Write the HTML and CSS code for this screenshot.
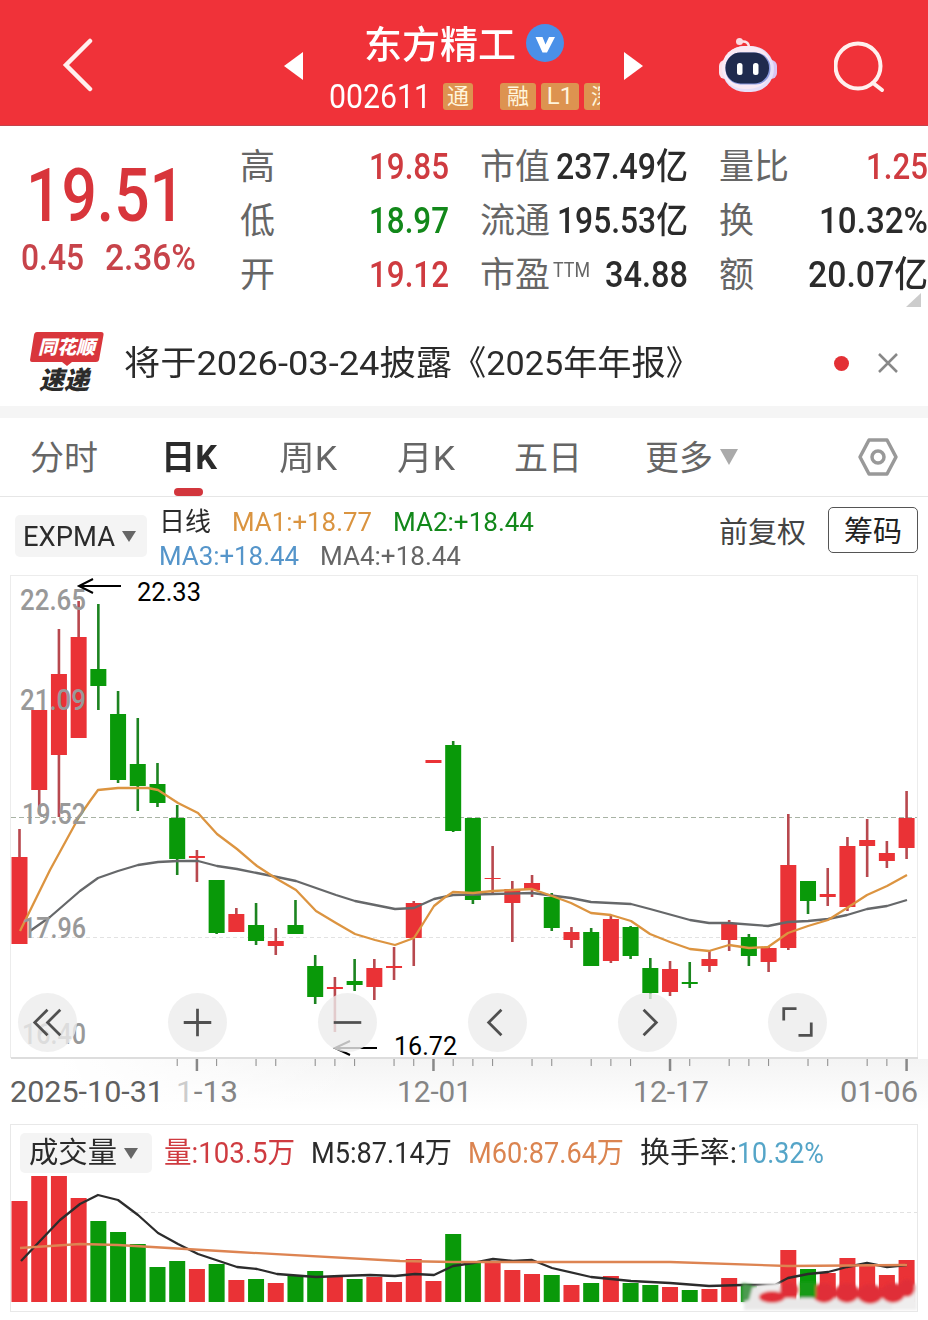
FILE: index.html
```html
<!DOCTYPE html>
<html lang="zh-CN">
<head>
<meta charset="UTF-8">
<meta name="viewport" content="width=device-width, initial-scale=1.0">
<title>东方精工 002611</title>
<link rel="stylesheet" href="styles.css">
</head>
<body>

<header class="topbar">
    <svg class="back" width="34" height="56" viewBox="0 0 34 56"><path d="M30 5 L6 29 L30 53"/></svg>
    <svg class="prev" width="19" height="28" viewBox="0 0 19 28"><path d="M19 0 V28 L0 14 Z"/></svg>
    <div class="stock">
        <div class="stock-name">
            <span data-w="152">东方精工</span>
            <svg width="38" height="38" viewBox="0 0 38 38"><circle cx="19" cy="19" r="19" fill="#4a90e8"/><path d="M9.500 13 H16.500 L19.500 20.500 L23 13 H29 L21 28.500 H16.500 Z" fill="#fff"/></svg>
        </div>
        <div class="stock-code">
            <span class="code" data-w="102">002611</span>
            <span class="tag tag-first">通</span>
            <div class="tags"><span class="tag wide">融</span><span class="tag l1">L1</span><span class="tag wide">深</span></div>
        </div>
    </div>
    <svg class="next" width="19" height="28" viewBox="0 0 19 28"><path d="M0 0 V28 L19 14 Z"/></svg>
    <svg class="robot" width="60" height="56" viewBox="0 0 60 56">
        <path d="M22 5 Q31 3 31 11" fill="none" stroke="#fbe3ea" stroke-width="2.500"/>
        <circle cx="21.500" cy="4.500" r="3.500" fill="#fbdbe2"/>
        <rect x="1" y="23" width="12" height="19" rx="6" fill="#fbe1ea"/>
        <rect x="47" y="23" width="12" height="19" rx="6" fill="#d9c5f2"/>
        <rect x="4" y="9" width="52" height="46" rx="23" fill="#e6e0fa"/>
        <rect x="4" y="9" width="49" height="43" rx="22" fill="#faeaf5"/>
        <rect x="7.500" y="15.500" width="45" height="32" rx="15" fill="#8c9be0"/>
        <rect x="7.500" y="15.500" width="43.500" height="31" rx="15" fill="#1f2a4e"/>
        <rect x="19" y="26" width="5.500" height="12" rx="2.500" fill="#fff"/>
        <rect x="35" y="26" width="5.500" height="12" rx="2.500" fill="#fff"/>
    </svg>
    <svg class="search" width="52" height="52" viewBox="0 0 52 52"><circle cx="24" cy="25" r="22.500"/><path d="M39 42 L48 49"/></svg>
</header>

<section class="quote">
    <div class="price">
        <div class="last"><span data-w="159">19.51</span></div>
        <div class="change"><span data-w="63">0.45</span><span data-w="91">2.36%</span></div>
    </div>
    <div class="stats">
        <div class="stat"><label>高</label><b class="red" data-w="80">19.85</b></div>
        <div class="stat"><label>市值</label><b data-w="132">237.49亿</b></div>
        <div class="stat"><label>量比</label><b class="red" data-w="62">1.25</b></div>
        <div class="stat"><label>低</label><b class="green" data-w="80">18.97</b></div>
        <div class="stat"><label>流通</label><b data-w="131">195.53亿</b></div>
        <div class="stat"><label>换</label><b data-w="109">10.32%</b></div>
        <div class="stat"><label>开</label><b class="red" data-w="80">19.12</b></div>
        <div class="stat"><label>市盈<sup data-w="37">TTM</sup></label><b data-w="83">34.88</b></div>
        <div class="stat"><label>额</label><b data-w="120">20.07亿</b></div>
    </div>
    <i class="corner"></i>
</section>

<section class="notice">
    <div class="logo">
        <svg width="74" height="34" viewBox="0 0 74 34"><path d="M7 0 H71 Q74 0 73.500 3 L69 28 Q68.500 30 66 30 H42 L37 34 L32 30 H2 Q0 30 0 28 L4 3 Q4.500 0 7 0 Z" fill="#d9363c"/></svg>
        <span class="logo-top">同花顺</span>
        <span class="logo-bottom">速递</span>
    </div>
    <div class="notice-text"><span data-w="328">将于2026-03-24披露</span><span data-w="248">《2025年年报》</span></div>
    <i class="dot"></i>
    <svg class="close" width="20" height="20" viewBox="0 0 20 20"><path d="M1 1 L19 19 M19 1 L1 19"/></svg>
</section>

<nav class="tabs">
    <span class="t1">分时</span>
    <span class="t2 active"><em data-w="56">日K</em></span>
    <span class="t3"><em data-w="58">周K</em></span>
    <span class="t4"><em data-w="58">月K</em></span>
    <span class="t5">五日</span>
    <span class="t6">更多</span>
    <i class="arrow"></i>
    <svg class="setting" width="40" height="38" viewBox="0 0 40 38"><path d="M11 2 H29 L38 19 L29 36 H11 L2 19 Z"/><circle cx="20" cy="19" r="6"/></svg>
</nav>

<section class="indicator">
    <div class="pick"><span data-w="92">EXPMA</span><i class="arrow"></i></div>
    <div class="ma">
        <div><span class="dark" data-w="52">日线</span><span class="orange" data-w="140">MA1:+18.77</span><span class="green" data-w="141">MA2:+18.44</span></div>
        <div><span class="blue" data-w="140">MA3:+18.44</span><span class="gray" data-w="141">MA4:+18.44</span></div>
    </div>
    <span class="fuquan">前复权</span>
    <button class="chips">筹码</button>
</section>

<section class="chart">
    <svg id="kline" width="928" height="549" viewBox="0 575 928 549"></svg>
    <div class="tools">
        <button><svg viewBox="0 0 60 60"><path d="M30 17 L17 30 L30 43 M43 17 L30 30 L43 43"/></svg></button>
        <button><svg viewBox="0 0 60 60"><path d="M16 30 H44 M30 16 V44"/></svg></button>
        <button><svg viewBox="0 0 60 60"><path d="M16 30 H44"/></svg></button>
        <button><svg viewBox="0 0 60 60"><path d="M34 17 L21 30 L34 43"/></svg></button>
        <button><svg viewBox="0 0 60 60"><path d="M26 17 L39 30 L26 43"/></svg></button>
        <button><svg viewBox="0 0 60 60"><path d="M16 28 V16 H29 M44 30 V43 H31"/></svg></button>
    </div>
</section>

<section class="volume">
    <div class="volume-head">
        <div class="pick"><span data-w="88">成交量</span><i class="arrow"></i></div>
        <span class="red" data-w="131">量:103.5万</span>
        <span class="dark" data-w="141">M5:87.14万</span>
        <span class="m60" data-w="156">M60:87.64万</span>
        <div class="rate"><span class="dark" data-w="97">换手率:</span><span class="cyan" data-w="87">10.32%</span></div>
    </div>
    <svg id="vol" width="906" height="135" viewBox="11 1176 906 135"></svg>
</section>

<script>
var RED = "#ea3236", GREEN = "#099909";
var X0 = 19.5, STEP = 19.713, i;

// colour, high, body top, body bottom, low, volume top
var days = [
    ["r", 829, 857, 944, 944, 1201], ["r", 710, 710, 790, 814, 1176], ["r", 629, 674, 755, 817, 1176],
    ["r", 601, 637, 738, 738, 1198], ["g", 604, 669, 686, 710, 1221], ["g", 691, 714, 780, 783, 1232],
    ["g", 718, 764, 786, 811, 1244], ["g", 763, 784, 803, 807, 1267], ["g", 805, 818, 859, 875, 1261],
    ["r", 850, 856, 858, 882, 1269], ["g", 880, 880, 933, 934, 1264], ["r", 908, 914, 932, 932, 1280],
    ["g", 903, 925, 941, 945, 1279], ["r", 928, 941, 946, 955, 1283], ["g", 900, 925, 934, 934, 1276],
    ["g", 955, 966, 997, 1004, 1271], ["r", 977, 987, 989, 1032, 1277], ["g", 959, 981, 985, 991, 1279],
    ["r", 959, 968, 987, 1000, 1277], ["r", 947, 966, 968, 980, 1282], ["r", 901, 903, 938, 966, 1259],
    ["r", 760, 760, 763, 763, 1281], ["g", 741, 745, 831, 832, 1234], ["g", 818, 818, 900, 904, 1262],
    ["r", 846, 878, 879, 893, 1262], ["r", 881, 889, 903, 942, 1270], ["r", 875, 883, 890, 897, 1274],
    ["g", 893, 897, 928, 931, 1275], ["r", 927, 932, 940, 948, 1285], ["g", 928, 932, 966, 966, 1283],
    ["r", 915, 919, 961, 963, 1276], ["g", 926, 927, 956, 959, 1283], ["g", 958, 968, 993, 999, 1285],
    ["r", 961, 969, 992, 996, 1287], ["g", 962, 982, 984, 988, 1290], ["r", 951, 959, 966, 972, 1289],
    ["r", 920, 923, 940, 951, 1278], ["g", 934, 937, 956, 966, 1285], ["r", 946, 948, 962, 972, 1291],
    ["r", 814, 865, 948, 950, 1250], ["g", 881, 881, 901, 914, 1269], ["r", 868, 894, 897, 906, 1273],
    ["r", 837, 846, 907, 911, 1258], ["r", 819, 840, 846, 877, 1266], ["r", 841, 853, 861, 868, 1275],
    ["r", 791, 818, 848, 859, 1260]
];
var ma1 = "20,931 50,870 79,817 90,801 98,790 118,788 148,788 158,790 178,803 198,813 217,834 237,849 257,866 277,879 296,890 316,911 336,923 355,934 375,940 395,945 414,938 424,922 434,906 444,898 453,892 473,893 493,891 513,890 532,889 552,896 571,903 591,913 611,915 631,921 650,934 670,942 690,949 709,951 729,945 749,948 768,947 788,933 808,926 828,920 847,908 867,895 887,886 907,875";
var ma4 = "30,931 50,917 80,891 98,878 118,871 138,865 158,862 178,861 198,861 217,866 237,869 257,873 277,877 296,881 316,888 336,895 355,901 375,905 395,909 414,908 434,899 453,895 493,894 532,893 571,898 591,902 631,904 650,909 690,920 709,923 729,923 768,926 788,922 808,921 828,919 847,915 867,909 887,906 907,900";
var m5 = "21,1261 40,1241 60,1220 80,1204 98,1195 118,1200 138,1215 158,1233 178,1244 198,1254 237,1267 257,1269 277,1274 316,1277 340,1276 370,1275 395,1276 415,1274 434,1275 453,1266 473,1263 493,1259 513,1261 532,1260 552,1268 591,1277 631,1281 670,1283 709,1286 742,1285 775,1285 788,1278 808,1274 828,1272 847,1267 867,1263 887,1267 907,1265";
var m60 = "20,1248 80,1244 118,1245 237,1252 400,1261 453,1262 670,1262 788,1266 907,1265";

function rect(x, y, w, h, fill) {
    return '<rect x="' + x + '" y="' + y + '" width="' + w + '" height="' + h + '" fill="' + fill + '"/>';
}
function line(x1, y1, x2, y2, cls) {
    return '<line x1="' + x1 + '" y1="' + y1 + '" x2="' + x2 + '" y2="' + y2 + '" class="' + cls + '"/>';
}
function text(x, y, w, cls, s) {
    return '<text x="' + x + '" y="' + y + '" textLength="' + w + '" lengthAdjust="spacingAndGlyphs" class="' + cls + '">' + s + '</text>';
}
function poly(points, cls) {
    return '<polyline points="' + points + '" class="' + cls + '"/>';
}

// candles
var k = '<defs><linearGradient id="fade" x1="0" y1="0" x2="0" y2="1"><stop offset="0" stop-color="#f4f4f4"/><stop offset="1" stop-color="#fff"/></linearGradient>';
k += '<linearGradient id="side"><stop offset="0" stop-color="#fff"/><stop offset="1" stop-color="#fff" stop-opacity="0"/></linearGradient></defs>';
k += rect(60, 1059, 868, 52, "url(#fade)") + rect(60, 1059, 300, 52, "url(#side)");
k += '<rect x="10.500" y="575.500" width="907" height="482" class="frame"/>';
k += line(11, 1058, 918, 1058, "axis");
k += line(11, 817.5, 917, 817.5, "mid") + line(30, 937.5, 917, 937.5, "grid");
var bars = "";
for (i = 0; i < days.length; i++) {
    var d = days[i], cx = X0 + STEP * i, c = d[0] == "r" ? RED : GREEN;
    k += rect(cx - 1.3, d[1], 2.6, d[4] - d[1], d[0] == "r" ? "#b8484e" : "#1c8420");
    k += rect(cx - 8, d[2], 16, d[3] - d[2], c);
    bars += rect(cx - 8, d[5], 16, 1302 - d[5], c);
}
k += poly(ma4, "line ma4") + poly(ma1, "line ma1");

// price scale
k += text(20, 610, 66, "scale", "22.65") + text(20, 710, 66, "scale", "21.09");
k += text(22, 824, 64, "scale", "19.52") + text(22, 938, 64, "scale", "17.96") + text(22, 1044, 64, "scale", "16.40");

// high and low marks
k += '<path d="M121 586 H80 M93 579 L79 586 L93 593" class="mark"/>' + text(137, 601, 64, "mark-text", "22.33");
k += '<path d="M377 1048 H336 M350 1041 L335 1048 L350 1055" class="mark"/>' + text(394, 1055, 63, "mark-text", "16.72");

// date axis
var small = [8, 10, 12, 13, 15, 16, 17, 19, 20, 22, 23, 24, 26, 27, 29, 30, 31, 34, 36, 37, 38, 40, 41, 43, 44];
var big = [9, 21, 33, 45];
for (i = 0; i < small.length; i++) k += line(X0 + STEP * small[i], 1059, X0 + STEP * small[i], 1066, "tick");
for (i = 0; i < big.length; i++) k += line(X0 + STEP * big[i], 1059, X0 + STEP * big[i], 1071, "tick big");
k += text(10, 1102, 154, "date first", "2025-10-31");
k += '<text x="176" y="1102" textLength="62" lengthAdjust="spacingAndGlyphs" class="date"><tspan class="pale">1</tspan>-13</text>';
k += text(397, 1102, 75, "date", "12-01") + text(633, 1102, 76, "date", "12-17") + text(840, 1102, 78, "date", "01-06");
document.getElementById("kline").innerHTML = k;

// volume
var v = '<defs><filter id="soft" x="-10%" y="-30%" width="120%" height="160%"><feGaussianBlur stdDeviation="1.500"/></filter></defs>';
v += line(130, 1212.5, 917, 1212.5, "grid") + bars + poly(m5, "line m5") + poly(m60, "line m60");
v += '<g filter="url(#soft)"><path d="M744 1290 Q760 1283 778 1283 L784 1298 L917 1298 V1310 H744 Z" fill="#e9e8e8"/>';
v += '<path d="M761 1287 L780 1282 L780 1296 L760 1296 Z" fill="#efeeee"/>';
v += '<path d="M742 1283 L753 1285 L749 1300 L742 1302 Z" fill="#4b9a50"/>';
v += '<path d="M892 1298 L917 1284 V1310 H892 Z" fill="#efeeee"/>';
var blobs = [[772, 1297, 13, 6], [789, 1290, 9, 8], [824, 1293, 12, 10], [847, 1293, 12, 10], [870, 1294, 13, 10], [893, 1293, 12, 10], [907, 1288, 8, 9]];
for (i = 0; i < blobs.length; i++) v += '<ellipse cx="' + blobs[i][0] + '" cy="' + blobs[i][1] + '" rx="' + blobs[i][2] + '" ry="' + blobs[i][3] + '" fill="#e02f38"/>';
v += rect(800, 1282, 16, 16, "#149a18") + '</g>';
document.getElementById("vol").innerHTML = v;

// fit labels to their column widths
var items = document.querySelectorAll("[data-w]");
for (i = 0; i < items.length; i++) {
    var w = +items[i].getAttribute("data-w"), full = items[i].getBoundingClientRect().width;
    items[i].style.transform = "scaleX(" + w / full + ")";
    items[i].style.marginRight = (w - full) + "px";
}
</script>

</body>
</html>
```

FILE: styles.css
```css
* {
    box-sizing: border-box;
}

body {
    margin: 0;
    width: 928px;
    height: 1320px;
    overflow: hidden;
    background: #fff;
    color: #2b2b2b;
    font-family: Roboto, "Noto Sans CJK SC", sans-serif;
}

svg {
    display: block;
}

[data-w] {
    display: inline-block;
    white-space: nowrap;
    flex: none;
    transform-origin: left center;
}

.red { color: #cf3b40; }
.green { color: #12881a; }
.orange { color: #da9440; }
.blue { color: #5595ca; }
.gray { color: #666; }
.dark { color: #2b2b2b; }
.cyan { color: #55a5c8; }
.volume-head .m60 { color: #db8450; }

/* top bar */
.topbar {
    display: flex;
    height: 126px;
    background: #f03239;
    border-bottom: 1px solid #c4434b;
}

.topbar svg {
    flex: none;
}

.back {
    margin: 36px 0 0 60px;
    fill: none;
    stroke: #fff0ee;
    stroke-width: 4.5;
    stroke-linecap: round;
}

.prev, .next {
    margin-top: 52px;
    fill: #fff;
}

.prev {
    margin-left: 190px;
}

.stock {
    width: 321px;
    color: #fff;
}

.stock-name {
    display: flex;
    align-items: center;
    height: 50px;
    margin: 19px 0 0 61px;
    font-size: 38px;
    font-weight: 500;
}

.stock-name span {
    padding-bottom: 6px;
}

.stock-name svg {
    margin: -3px 0 0 10px;
}

.stock-code {
    display: flex;
    align-items: center;
    height: 30px;
    margin: 12px 0 0 26px;
}

.code {
    padding-top: 2px;
    font-size: 33px;
    line-height: 30px;
}

.tag {
    flex: none;
    width: 30px;
    height: 27px;
    border-radius: 3px;
    background: #dd9350;
    color: #fff5dc;
    font-size: 22px;
    line-height: 27px;
    text-align: center;
}

.tag-first {
    margin-left: 12px;
}

.tags {
    display: flex;
    gap: 5px;
    width: 100px;
    margin-left: 27px;
    overflow: hidden;
}

.tag.wide {
    width: 36px;
}

.tag.l1 {
    width: 38px;
    font-size: 24px;
}

.robot {
    margin: 37px 0 0 75px;
}

.search {
    margin: 41px 0 0 56px;
    fill: none;
    stroke: #fff0ee;
    stroke-width: 4;
    stroke-linecap: round;
}

/* quote */
.quote {
    position: relative;
    display: flex;
    height: 194px;
}

.price {
    width: 240px;
    color: #d8353b;
}

.last {
    height: 86px;
    margin: 26px 0 0 26px;
    font-size: 75px;
    line-height: 86px;
    font-weight: 500;
}

.change {
    display: flex;
    gap: 21px;
    margin-left: 21px;
    color: #c7434a;
    font-size: 36px;
    line-height: 40px;
    font-weight: 500;
}

.stats {
    display: grid;
    grid-template-columns: 209px 208px 209px;
    grid-auto-rows: 54px;
    column-gap: 31px;
    padding-top: 14px;
}

.stat {
    display: flex;
    justify-content: space-between;
    align-items: center;
    font-size: 36px;
    line-height: 54px;
    white-space: nowrap;
}

.stat label {
    padding-top: 1px;
    color: #666;
    font-size: 35px;
}

.stat b {
    font-weight: 500;
}

.stat sup {
    margin-left: 3px;
    font-size: 21px;
    line-height: 20px;
    vertical-align: 10px;
}

.corner {
    position: absolute;
    right: 7px;
    bottom: 13px;
    border-left: 15px solid transparent;
    border-bottom: 14px solid #ccc;
}

/* notice */
.notice {
    display: flex;
    align-items: center;
    height: 86px;
}

.logo {
    position: relative;
    width: 74px;
    height: 62px;
    margin-left: 30px;
}

.logo span {
    position: absolute;
    font-weight: 900;
    font-style: italic;
    white-space: nowrap;
}

.logo-top {
    left: 8px;
    top: 4px;
    color: #fff;
    font-size: 19px;
    line-height: 24px;
}

.logo-bottom {
    left: 9px;
    top: 35px;
    font-size: 25px;
    line-height: 27px;
}

.notice-text {
    display: flex;
    width: 576px;
    padding-bottom: 6px;
    margin-left: 20px;
    font-size: 34px;
}

.dot {
    width: 15px;
    height: 15px;
    margin-left: 134px;
    border-radius: 50%;
    background: #e33035;
}

.close {
    margin-left: 29px;
    stroke: #888;
    stroke-width: 2.5;
}

/* tabs */
.tabs {
    display: flex;
    align-items: center;
    height: 91px;
    border-top: 12px solid #f5f5f5;
    border-bottom: 1px solid #e6e6e6;
    color: #666;
    font-size: 34px;
}

.tabs em {
    font-style: normal;
}

.tabs > span {
    flex: none;
    padding-bottom: 4px;
}

.tabs .t1 { width: 161px; padding-left: 30px; }
.tabs .t2 { width: 118px; }
.tabs .t3 { width: 118px; }
.tabs .t4 { width: 117px; }
.tabs .t5 { width: 131px; }

.tabs .t2.active {
    position: relative;
    align-self: stretch;
    line-height: 78px;
    color: #2b2b2b;
    font-weight: 700;
}

.tabs .active:after {
    position: absolute;
    content: "";
    left: 13px;
    bottom: 0;
    width: 29px;
    height: 8px;
    border-radius: 4px;
    background: #d2363d;
}

.arrow {
    flex: none;
    border: solid transparent;
    border-width: 11px 7.5px 0;
    border-top-color: #666;
}

.tabs .arrow {
    margin-left: 7px;
    border-width: 16px 9px 0;
    border-top-color: #aaa;
}

.setting {
    margin-left: 120px;
    fill: none;
    stroke: #999;
    stroke-width: 3.5;
    stroke-linejoin: round;
}

/* indicator */
.indicator {
    display: flex;
    height: 78px;
}

.pick {
    display: flex;
    align-items: center;
    flex: none;
    width: 132px;
    height: 42px;
    padding-left: 8px;
    border-radius: 5px;
    background: #f4f4f4;
}

.pick .arrow {
    margin-left: 7px;
}

.indicator .pick {
    margin: 18px 0 0 15px;
    font-size: 28px;
}

.ma {
    width: 560px;
    margin: 8px 0 0 12px;
    font-size: 26px;
    line-height: 34px;
}

.ma div {
    display: flex;
    gap: 21px;
}

.fuquan {
    flex: none;
    width: 109px;
    margin-top: 15px;
    color: #444;
    font-size: 29px;
    line-height: 42px;
}

.chips {
    flex: none;
    width: 90px;
    height: 46px;
    margin-top: 10px;
    padding: 3px 0 0;
    border: 1px solid #555;
    border-radius: 5px;
    background: #fff;
    color: #222;
    font: 29px/40px Roboto, "Noto Sans CJK SC", sans-serif;
}

/* chart */
.chart {
    position: relative;
    height: 549px;
}

.tools {
    position: absolute;
    left: 18px;
    top: 418px;
    display: flex;
    gap: 91px;
}

.tools button {
    width: 59px;
    height: 59px;
    padding: 0;
    border: 0;
    border-radius: 50%;
    background: rgba(236, 236, 236, .8);
}

.tools svg {
    fill: none;
    stroke: #505050;
    stroke-width: 2.8;
}

.frame { fill: none; stroke: #ececec; }
.axis { stroke: #ddd; stroke-width: 2; }
.mid { stroke: #a8b3a4; stroke-dasharray: 5 3; }
.grid { stroke: #e2e2e2; stroke-dasharray: 4 3; }
.line { fill: none; stroke-width: 2.3; stroke-linejoin: round; }
.ma1 { stroke: #dc9440; }
.ma4 { stroke: #66686a; }
.m5 { stroke: #2c2c2c; }
.line.m60 { stroke: #dd8452; }

.scale { font-size: 29px; fill: #999; font-weight: 500; }
.mark { fill: none; stroke: #000; stroke-width: 2; }
.mark-text { font-size: 26px; fill: #000; }
.tick { stroke: #888; stroke-width: 1; }
.tick.big { stroke-width: 2.5; }
.date { font-size: 30px; fill: #858585; }
.date.first { fill: #606060; }
.date .pale { fill: #ccc; }

/* volume */
.volume {
    height: 188px;
    margin: 0 10px;
    border: 1px solid #e8e8e8;
}

.volume-head {
    display: flex;
    align-items: center;
    gap: 16px;
    height: 51px;
    padding: 5px 0 0 9px;
    font-size: 29px;
    line-height: 40px;
}

.volume-head .pick {
    height: 40px;
    margin-right: -4px;
    padding-left: 9px;
}

.rate {
    display: flex;
}
```
